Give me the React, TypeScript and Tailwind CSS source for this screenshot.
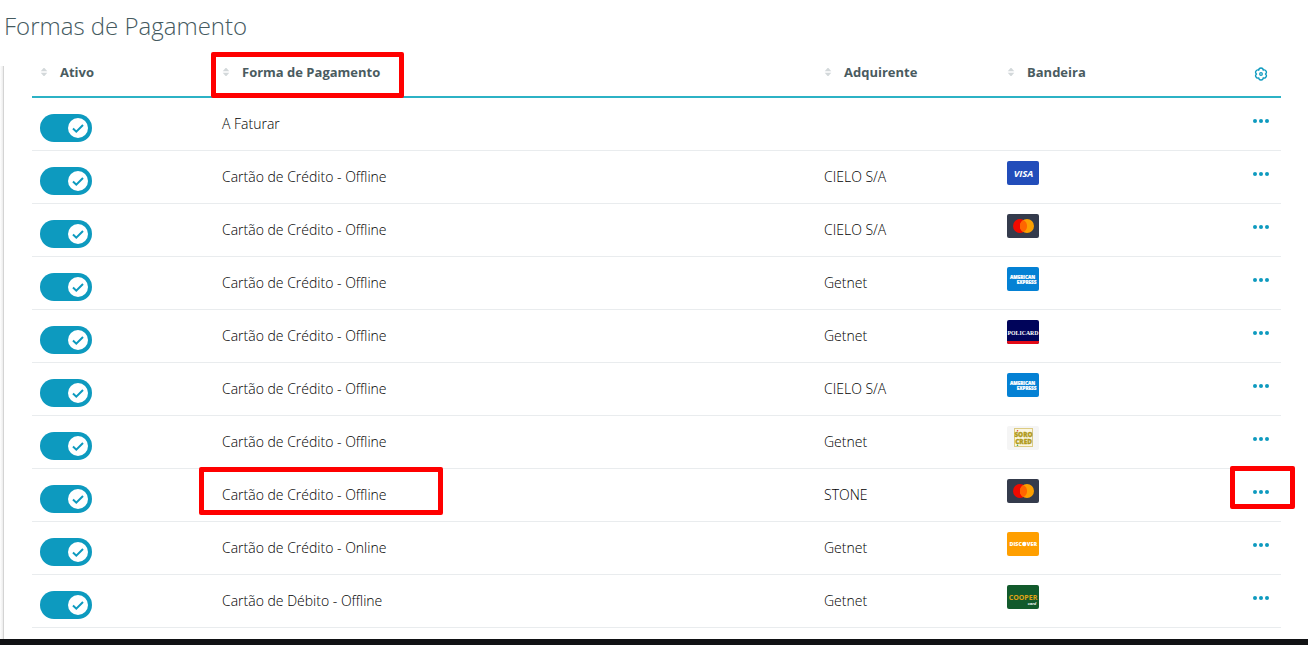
import { useState } from 'react';

type Brand = 'visa' | 'mastercard' | 'amex' | 'policard' | 'sorocred' | 'discover' | 'cooper';

interface PaymentMethod {
  id: number;
  name: string;
  acquirer?: string;
  brand?: Brand;
  highlighted?: boolean;
}

const methods: PaymentMethod[] = [
  { id: 1, name: 'A Faturar' },
  { id: 2, name: 'Cartão de Crédito - Offline', acquirer: 'CIELO S/A', brand: 'visa' },
  { id: 3, name: 'Cartão de Crédito - Offline', acquirer: 'CIELO S/A', brand: 'mastercard' },
  { id: 4, name: 'Cartão de Crédito - Offline', acquirer: 'Getnet', brand: 'amex' },
  { id: 5, name: 'Cartão de Crédito - Offline', acquirer: 'Getnet', brand: 'policard' },
  { id: 6, name: 'Cartão de Crédito - Offline', acquirer: 'CIELO S/A', brand: 'amex' },
  { id: 7, name: 'Cartão de Crédito - Offline', acquirer: 'Getnet', brand: 'sorocred' },
  { id: 8, name: 'Cartão de Crédito - Offline', acquirer: 'STONE', brand: 'mastercard', highlighted: true },
  { id: 9, name: 'Cartão de Crédito - Online', acquirer: 'Getnet', brand: 'discover' },
  { id: 10, name: 'Cartão de Débito - Offline', acquirer: 'Getnet', brand: 'cooper' }
];

const cardColors: Record<Brand, string> = {
  visa: '#224dba',
  mastercard: '#343b4c',
  amex: '#0481d4',
  policard: '#00045a',
  sorocred: '#f5f5f5',
  discover: '#ff9f00',
  cooper: '#125a2c'
};

function BrandCard({ brand }: { brand: Brand }) {
  return (
    <svg className="block h-6 w-8" viewBox="0 0 32 24" role="img" aria-label={brand} fontFamily="Open Sans, sans-serif">
      <rect width="32" height="24" rx="2" fill={cardColors[brand]} />
      {brand === 'visa' && (
        <text x="16.5" y="15.5" textAnchor="middle" fontSize="9.5" fontWeight="700" fontStyle="italic" fill="#fff">VISA</text>
      )}
      {brand === 'mastercard' && (
        <g>
          <circle cx="13" cy="12" r="7" fill="#f00a00" />
          <circle cx="20" cy="12" r="7" fill="#fca000" />
          <path d="M16.5 5.9a7 7 0 0 1 0 12.2a7 7 0 0 1 0-12.2z" fill="#ff6500" />
        </g>
      )}
      {brand === 'amex' && (
        <g fill="#fff" stroke="#fff" strokeWidth="0.2" fontSize="4.6" fontWeight="800" textAnchor="middle">
          <text x="15.5" y="12">AMERICAN</text>
          <text x="19.5" y="16.5">EXPRESS</text>
        </g>
      )}
      {brand === 'policard' && (
        <g>
          <path d="M0 21h32v1a2 2 0 0 1-2 2H2a2 2 0 0 1-2-2z" fill="#e30a17" />
          <text x="16" y="15" textAnchor="middle" fontSize="5.8" fontWeight="700" fontFamily="Liberation Serif, serif" fill="#fff">POLICARD</text>
        </g>
      )}
      {brand === 'sorocred' && (
        <g>
          <rect x="7.5" y="2.5" width="18" height="18" fill="#fbf6df" stroke="#dccb83" />
          <g fill="#b19a1c" stroke="#b19a1c" strokeWidth="0.3" fontSize="6.4" fontWeight="800" textAnchor="middle">
            <text x="16.5" y="11">SORO</text>
            <text x="16.5" y="17.5">CRED</text>
          </g>
          <circle cx="10.5" cy="4.8" r="0.8" fill="#e04a3a" />
          <circle cx="10.5" cy="19.2" r="0.8" fill="#3aa060" />
        </g>
      )}
      {brand === 'discover' && (
        <g fill="#fff" fontSize="5.4" fontWeight="800">
          <text x="2.5" y="14">DISC</text>
          <circle cx="17.2" cy="12" r="2.2" />
          <text x="19.8" y="14">VER</text>
        </g>
      )}
      {brand === 'cooper' && (
        <g fontWeight="700">
          <text x="16" y="14.5" textAnchor="middle" fontSize="7" fill="#e0a416">COOPER</text>
          <text x="25" y="20" textAnchor="middle" fontSize="4" fontStyle="italic" fill="#fff" fontFamily="Liberation Sans, sans-serif">card</text>
        </g>
      )}
    </svg>
  );
}

function SortIcon() {
  return (
    <svg className="h-2 w-2 shrink-0" viewBox="0 0 8 8" fill="#d3d8da" aria-hidden="true">
      <path d="M4 -0.5l3.3 3.7H0.7z" />
      <path d="M4 8.5l3.3-3.7H0.7z" />
    </svg>
  );
}

function SortHeader({ label }: { label: string }) {
  return (
    <button type="button" className="flex items-center gap-3 text-[13px] leading-5 font-bold">
      <SortIcon />
      {label}
    </button>
  );
}

function Toggle({ label }: { label: string }) {
  const [checked, setChecked] = useState(true);

  return (
    <label className={`flex h-7 w-13 cursor-pointer items-center rounded-full px-1 ${checked ? 'justify-end bg-[#0d9abf]' : 'justify-start bg-gray-300'}`}>
      <input
        type="checkbox"
        className="sr-only"
        aria-label={label}
        checked={checked}
        onChange={(e) => setChecked(e.target.checked)}
      />
      <span className="flex size-5 items-center justify-center rounded-full bg-white">
        {checked && (
          <svg className="size-5" viewBox="0 0 20 20" fill="none" stroke="#0d9abf" strokeWidth="2" aria-hidden="true">
            <path d="M5 10.5l3.3 3.2L15 7" />
          </svg>
        )}
      </span>
    </label>
  );
}

function Highlight({ className }: { className: string }) {
  return <span className={`pointer-events-none absolute z-10 rounded-xs border-5 border-[#ff0000] ${className}`} />;
}

export default function App() {
  return (
    <div className="flex min-h-screen flex-col bg-white font-['Open_Sans',sans-serif] text-black">
      <h1 className="h-[50px] pt-2 pl-1 text-2xl leading-9 font-light text-[#455a5f]">Formas de Pagamento</h1>

      <main className="flex flex-1 pr-[27px] pb-[11px]">
        <div className="mt-4 -mb-[11px] w-1 shrink-0 border-r border-[#d4d4d4] bg-linear-to-r from-white to-[#ececec]" />
        <div className="flex-1 pl-7">
          <table className="w-full table-fixed border-separate border-spacing-0 text-left text-sm font-light">
            <thead className="text-[#4a5b5f]">
              <tr className="h-12 align-top *:border-b-2 *:border-[#2cb2c5] *:pt-3">
                <th className="w-[182px] px-2"><SortHeader label="Ativo" /></th>
                <th className="relative px-2">
                  <SortHeader label="Forma de Pagamento" />
                  <Highlight className="top-[2px] -left-[3px] h-[46px] w-[193px]" />
                </th>
                <th className="w-[183px] px-2"><SortHeader label="Adquirente" /></th>
                <th className="w-[242px] px-2"><SortHeader label="Bandeira" /></th>
                <th className="w-10">
                  <button type="button" aria-label="Configurar colunas" className="mx-auto mt-[5px] block">
                    <svg className="block size-[14px]" viewBox="0 0 14 14" fill="none" stroke="#0d9abf" strokeWidth="1.3" strokeLinejoin="round" aria-hidden="true">
                      <path d="M11.4 7A2.2 2.2 0 0 1 9.2 10.8A2.2 2.2 0 0 1 4.8 10.8A2.2 2.2 0 0 1 2.6 7A2.2 2.2 0 0 1 4.8 3.2A2.2 2.2 0 0 1 9.2 3.2A2.2 2.2 0 0 1 11.4 7z" />
                      <circle cx="7" cy="7" r="1.3" />
                    </svg>
                  </button>
                </th>
              </tr>
            </thead>
            <tbody>
              {methods.map((method) => (
                <tr key={method.id} className="h-[53px] align-top leading-5 *:border-b *:border-[#e9ecee]">
                  <td className="px-2 pt-4"><Toggle label={method.name} /></td>
                  <td className="relative px-2 pt-4">
                    {method.name}
                    {method.highlighted && <Highlight className="-top-[2px] -left-[15px] h-12 w-[244px]" />}
                  </td>
                  <td className="px-2 pt-4">{method.acquirer}</td>
                  <td className="px-2 pt-[10px]">{method.brand && <BrandCard brand={method.brand} />}</td>
                  <td className="relative pt-[15px]">
                    <button type="button" aria-label="Ações" className="mx-auto block">
                      <svg className="block h-4 w-4" viewBox="0 0 16 16" fill="#0d9abf" aria-hidden="true">
                        <circle cx="2" cy="8" r="2" />
                        <circle cx="8" cy="8" r="2" />
                        <circle cx="14" cy="8" r="2" />
                      </svg>
                    </button>
                    {method.highlighted && <Highlight className="-top-[3px] -left-[11px] h-[43px] w-[65px]" />}
                  </td>
                </tr>
              ))}
            </tbody>
          </table>
        </div>
      </main>

      <footer className="h-[6px] bg-[#111214]" />
    </div>
  );
}
